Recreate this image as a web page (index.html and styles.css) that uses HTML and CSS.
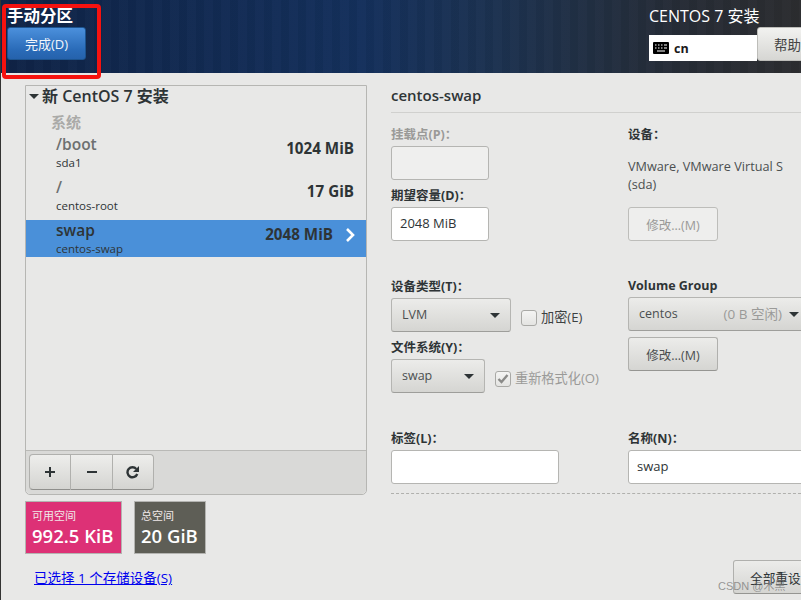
FILE: index.html
```html
<!DOCTYPE html>
<html lang="zh">
<head>
<meta charset="utf-8">
<title>手动分区</title>
<link rel="stylesheet" href="styles.css">
</head>
<body>
<div class="page">
  <header class="top">
    <div class="top-left">
      <h1 class="spoke-title">手动分区</h1>
      <button class="done">完成(D)</button>
    </div>
    <div class="top-right">
      <div class="product">CENTOS 7 安装</div>
      <div class="top-controls">
        <div class="kbd">
          <svg class="kbd-icon" width="16" height="12" viewBox="0 0 16 12"><rect width="16" height="12" rx="1" fill="#000"/><path d="M2 3h1.5M5 3h1.5M8 3h1.5M11 3h3M2 6h1.5M5 6h1.5M8 6h1.5M11 6h3M4 9h8" stroke="#fff" stroke-width="1.2" fill="none"/></svg>
          <span>cn</span>
        </div>
        <button class="help">帮助</button>
      </div>
    </div>
  </header>
  <div class="annot"></div>
  <main class="content">
    <section class="left">
      <div class="panel">
        <div class="tree">
          <div class="tree-head"><span class="arrow"></span>新 CentOS 7 安装</div>
          <div class="group">系统</div>
          <div class="mount"><div><div class="mname muted">/boot</div><div class="msub">sda1</div></div><div class="msize">1024 MiB</div></div>
          <div class="mount"><div><div class="mname muted">/</div><div class="msub">centos-root</div></div><div class="msize">17 GiB</div></div>
          <div class="mount sel"><div><div class="mname">swap</div><div class="msub">centos-swap</div></div><div class="msize">2048 MiB</div>
            <svg class="chev" width="10" height="16" viewBox="0 0 10 16"><path d="M2 2l6 6-6 6" stroke="#fff" stroke-width="2.6" fill="none"/></svg></div>
        </div>
        <div class="toolbar">
          <div class="tools">
            <button class="tool"><svg width="12" height="12" viewBox="0 0 12 12"><path d="M6 1v10M1 6h10" stroke="#2e3436" stroke-width="2"/></svg></button>
            <button class="tool"><svg width="12" height="12" viewBox="0 0 12 12"><path d="M1 6h10" stroke="#2e3436" stroke-width="2"/></svg></button>
            <button class="tool"><svg width="14" height="14" viewBox="0 0 14 14"><path d="M11.2 9a5 5 0 1 1-.9-5" stroke="#2e3436" stroke-width="2.4" fill="none"/><path d="M13 1v6H7z" fill="#2e3436"/></svg></button>
          </div>
        </div>
      </div>
      <div class="cards">
        <div class="card pink"><div class="clabel">可用空间</div><div class="cval">992.5 KiB</div></div>
        <div class="card gray"><div class="clabel">总空间</div><div class="cval">20 GiB</div></div>
      </div>
      <a class="devlink" href="#">已选择 1 个存储设备(S)</a>
    </section>
    <section class="right">
      <h2 class="rtitle">centos-swap</h2>
      <div class="form">
        <div class="col col-a">
          <label class="lab dis">挂载点(P)：</label>
          <div class="entry w98 off"></div>
          <label class="lab l2">期望容量(D)：</label>
          <div class="entry w98">2048 MiB</div>
          <label class="lab l3">设备类型(T)：</label>
          <div class="line">
            <div class="combo w120"><span>LVM</span><i class="caret"></i></div>
            <div class="check"><span class="box"></span><span class="chk-text">加密(E)</span></div>
          </div>
          <label class="lab l2">文件系统(Y)：</label>
          <div class="line">
            <div class="combo w94"><span>swap</span><i class="caret"></i></div>
            <div class="check dis"><span class="box on"><svg width="12" height="10" viewBox="0 0 12 10"><path d="M1.5 5l3 3 6-7" stroke="#8a8a88" stroke-width="2.4" fill="none"/></svg></span><span class="chk-text">重新格式化(O)</span></div>
          </div>
          <label class="lab l4">标签(L)：</label>
          <div class="entry w168"></div>
        </div>
        <div class="col col-b">
          <label class="lab">设备：</label>
          <p class="devtext">VMware, VMware Virtual S<br>(sda)</p>
          <button class="btn off">修改...(M)</button>
          <label class="lab l5">Volume Group</label>
          <div class="combo w180"><span>centos</span><span class="free">(0 B 空闲)</span><i class="caret"></i></div>
          <button class="btn m6">修改...(M)</button>
          <label class="lab l6">名称(N)：</label>
          <div class="entry w180">swap</div>
        </div>
      </div>
      <div class="dash"></div>
      <div class="reset-row"><button class="btn reset">全部重设</button></div>
    </section>
  </main>
  <div class="mark">CSDN @木黑</div>
</div>
</body>
</html>
```
FILE: styles.css
```css
* { box-sizing: border-box; }
html, body { margin: 0; padding: 0; }
body {
  width: 801px; height: 600px; overflow: hidden;
  font-family: "Open Sans", "Noto Sans CJK SC", sans-serif;
  font-size: 12.5px; color: #2e3436; background: #e8e8e7;
}
button { font: inherit; color: inherit; padding: 0; }
.page { position: relative; width: 801px; height: 600px; overflow: hidden; border-left: 1px solid #333; }

.top {
  height: 73px; margin-left: -1px; display: flex; justify-content: space-between; color: #fff;
  background:
    repeating-linear-gradient(90deg, rgba(255,255,255,.012) 0 9px, rgba(0,0,0,.03) 9px 17px),
    linear-gradient(90deg, #0f2346 0%, #14305c 45%, #1c3250 62%, #262c36 85%, #2c2d30 100%);
}
.top-left { padding: 6px 0 0 7px; }
.spoke-title { margin: 0; font-size: 16.5px; line-height: 20px; font-weight: 700; }
.done {
  display: block; margin-top: 1px; width: 79px; height: 33px; color: #f2f6fb; font-size: 13px;
  border: 1px solid #1c5490; border-radius: 3px;
  background: linear-gradient(#4b90dc, #2a6bb8 70%, #2562ac);
}
.top-right { width: 152px; padding-top: 6px; }
.product { font-size: 16px; line-height: 20px; }
.top-controls { display: flex; margin-top: 9px; }
.kbd {
  width: 108px; height: 26px; background: #fff; color: #1a1a1a; font-weight: 700; font-size: 12.5px;
  display: flex; align-items: center; gap: 5px; padding-left: 4px; flex: none;
}
.help {
  flex: none; width: 60px; height: 34px; margin-top: -8px; text-align: left; padding-left: 16px; color: #444; font-size: 13.5px;
  border: 1px solid #bdbdb9; border-radius: 3px; background: linear-gradient(#f2f2f0, #d6d6d3);
}
.annot {
  position: absolute; left: 1px; top: 4px; width: 99px; height: 75px;
  border: 4px solid #f5120f; border-radius: 4px;
}

.content { display: flex; height: 527px; }
.left { width: 342px; margin-left: 24px; padding-top: 12px; flex: none; }
.panel {
  height: 410px; border: 1px solid #b6b6b3; border-radius: 0 0 5px 5px;
  display: flex; flex-direction: column;
}
.tree { flex: 1; }
.tree-head { height: 21px; font-size: 16px; font-weight: 600; line-height: 21px; padding-left: 3px; color: #2e3436; display: flex; align-items: center; }
.arrow { border: 5px solid transparent; border-top: 5px solid #2e3436; border-bottom: 0; margin-right: 3px; }
.group { height: 27px; padding: 5px 0 0 25px; font-size: 15px; line-height: 20px; font-weight: 700; color: #aaaaa8; }
.mount { height: 37px; margin-bottom: 6px; padding: 0 12px 0 30px; display: flex; justify-content: space-between; align-items: flex-start; position: relative; }
.mname { font-size: 15.5px; line-height: 21px; font-weight: 600; color: #2e3436; }
.mname.muted { color: #6d7070; }
.msub { font-size: 11.5px; line-height: 15px; color: #2e3436; }
.msize { font-size: 15.2px; line-height: 20px; margin-top: 4px; font-weight: 700; color: #2e3436; }
.sel { background: #4a90d9; padding-right: 33px; }
.chev { position: absolute; right: 11px; top: 7px; }
.toolbar { height: 44px; border-top: 1px solid #b9b9b6; background: #d9d9d7; border-radius: 0 0 5px 5px; padding: 3px 0 0 3px; }
.tools { display: flex; width: 125px; }
.tool {
  width: 42px; height: 36px; display: flex; align-items: center; justify-content: center;
  border: 1px solid #b0b0ad; border-left-width: 0; border-bottom-color: #8f8f8c; background: linear-gradient(#eeeeec, #d4d4d1);
}
.tool:first-child { border-left-width: 1px; border-radius: 4px 0 0 4px; }
.tool:last-child { border-radius: 0 4px 4px 0; width: 41px; }

.cards { display: flex; gap: 12px; margin-top: 6px; }
.card { height: 53px; border: 1px solid #b4b4b1; color: #fff; padding: 6px 6px 0 6px; }
.pink { width: 97px; background: #dd3176; }
.gray { width: 72px; background: #5e5e56; }
.clabel { font-size: 11px; line-height: 16px; color: #f0e8e8; }
.cval { font-size: 18.5px; line-height: 24px; font-weight: 600; white-space: nowrap; }
.devlink { display: inline-block; margin: 15px 0 0 9px; color: #0000ee; font-size: 13.5px; line-height: 18px; }

.right { margin-left: 24px; width: 410px; flex: none; padding-top: 12px; }
.rtitle { margin: 0; font-size: 15px; line-height: 20px; font-weight: 600; color: #2e3436; height: 28px; border-bottom: 1px solid #d0d0ce; }
.form { display: flex; padding-top: 12px; }
.col { flex: none; display: flex; flex-direction: column; align-items: flex-start; }
.col-a { width: 237px; }
.col-b { width: 173px; }
.lab { display: block; font-family: "Open Sans", "Noto Sans CJK TC", sans-serif; font-size: 12.5px; line-height: 20px; font-weight: 700; height: 18px; color: #2e3436; }
.lab.dis { color: #9a9a98; }
.l2 { margin-top: 6px; }
.l3 { margin-top: 36px; }
.l4 { margin-top: 36px; }
.l5 { margin-top: 35px; }
.l6 { margin-top: 58px; }
.entry {
  height: 34px; margin-top: 3px; background: #fff; border: 1px solid #b5b5b2; border-radius: 3px;
  padding-left: 8px; line-height: 31px; font-size: 13px; color: #2e3436;
}
.entry.off { background: #efefee; }
.w98 { width: 98px; }
.w168 { width: 168px; }
.w180 { width: 180px; }
.w120 { width: 120px; }
.w94 { width: 94px; }
.line { display: flex; align-items: flex-start; margin-top: 3px; }
.combo {
  height: 34px; display: flex; align-items: center; padding: 0 10px 2px; font-size: 12.5px; flex: none;
  border: 1px solid #b5b5b2; border-bottom-color: #9e9e9b; border-radius: 3px; background: linear-gradient(#ececea, #d5d5d2);
  justify-content: space-between; color: #4b4f50; margin-top: 0;
}
.col-b .combo { margin-top: 3px; padding-right: 8px; }
.free { color: #9a9a98; margin-left: auto; margin-right: 7px; font-size: 13.5px; }
.caret { border: 5px solid transparent; border-top: 5px solid #2e3436; border-bottom: 0; width: 0; height: 0; flex: none; margin-top: 2px; }
.check { display: flex; align-items: center; gap: 4px; margin: 12px 0 0 10px; font-size: 13.2px; color: #3d4142; white-space: nowrap; }
.check.dis { color: #9a9a98; }
.chk-text { margin-top: -4px; }
.box {
  width: 16px; height: 16px; border: 1px solid #a9a9a6; border-radius: 3px; background: linear-gradient(#f4f4f3, #e4e4e2);
  display: flex; align-items: center; justify-content: center;
}
.devtext { margin: 14px 0 0; font-size: 12.7px; line-height: 18px; color: #4b4f50; height: 40px; white-space: nowrap; }
.btn {
  display: block; width: 90px; height: 34px; font-size: 12.5px; color: #4b4f50;
  border: 1px solid #b0b0ad; border-bottom-color: #959592; border-radius: 3px; background: linear-gradient(#ececea, #d5d5d2);
}
.btn.off { background: #eeeeed; color: #9a9a98; border-color: #bdbdba; margin-top: 10px; }
.btn.m6 { margin-top: 6px; }
.dash { margin-top: 9px; width: 410px; border-top: 1px dashed #b0b0ad; }
.reset-row { padding: 66px 0 0 342px; }
.btn.reset { width: 100px; height: 34px; margin: 0; text-align: left; padding-left: 16px; color: #2e3436; white-space: nowrap; font-size: 12.7px; }
.mark { position: absolute; left: 717px; top: 577px; font-size: 11px; color: rgba(120,120,120,.75); white-space: nowrap; font-family: "Liberation Sans", "Noto Sans CJK SC", sans-serif; }
```
